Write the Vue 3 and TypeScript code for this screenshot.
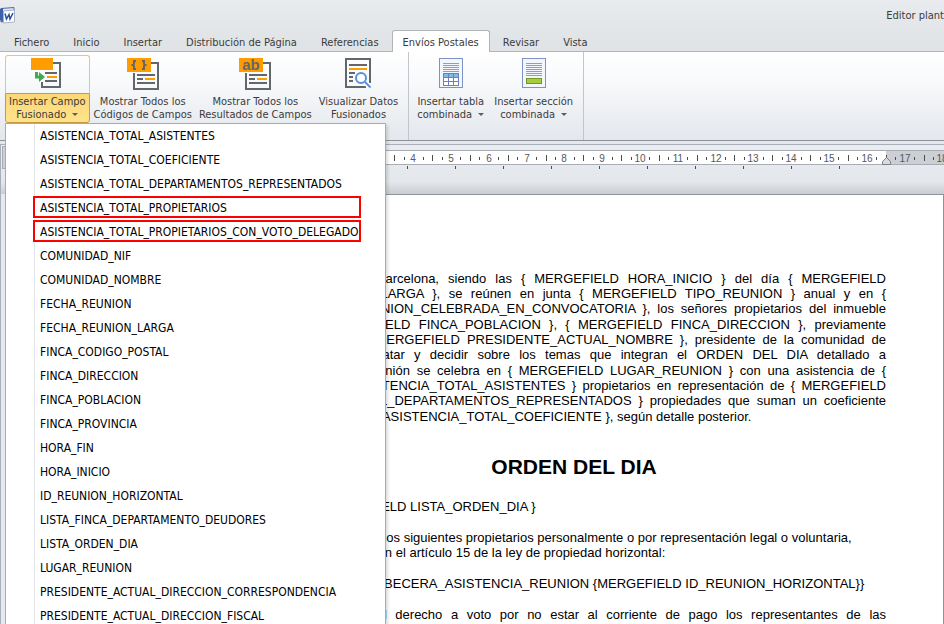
<script setup lang="ts">
import { ref } from 'vue'

const title = 'Editor plant'

const tabs: string[] = [
  'Fichero',
  'Inicio',
  'Insertar',
  'Distribución de Página',
  'Referencias',
  'Envíos Postales',
  'Revisar',
  'Vista',
]
const activeTab = ref('Envíos Postales')

interface MergeField {
  name: string
  marked?: boolean
}

const fields: MergeField[] = [
  { name: 'ASISTENCIA_TOTAL_ASISTENTES' },
  { name: 'ASISTENCIA_TOTAL_COEFICIENTE' },
  { name: 'ASISTENCIA_TOTAL_DEPARTAMENTOS_REPRESENTADOS' },
  { name: 'ASISTENCIA_TOTAL_PROPIETARIOS', marked: true },
  { name: 'ASISTENCIA_TOTAL_PROPIETARIOS_CON_VOTO_DELEGADO', marked: true },
  { name: 'COMUNIDAD_NIF' },
  { name: 'COMUNIDAD_NOMBRE' },
  { name: 'FECHA_REUNION' },
  { name: 'FECHA_REUNION_LARGA' },
  { name: 'FINCA_CODIGO_POSTAL' },
  { name: 'FINCA_DIRECCION' },
  { name: 'FINCA_POBLACION' },
  { name: 'FINCA_PROVINCIA' },
  { name: 'HORA_FIN' },
  { name: 'HORA_INICIO' },
  { name: 'ID_REUNION_HORIZONTAL' },
  { name: 'LISTA_FINCA_DEPARTAMENTO_DEUDORES' },
  { name: 'LISTA_ORDEN_DIA' },
  { name: 'LUGAR_REUNION' },
  { name: 'PRESIDENTE_ACTUAL_DIRECCION_CORRESPONDENCIA' },
  { name: 'PRESIDENTE_ACTUAL_DIRECCION_FISCAL' },
]

// Lines of the opening paragraph, already broken by the editor.
const opening: string[] = [
  'En la ciudad de Barcelona, siendo las { MERGEFIELD HORA_INICIO } del día { MERGEFIELD',
  'FECHA_REUNION_LARGA }, se reúnen en junta { MERGEFIELD TIPO_REUNION } anual y en {',
  'MERGEFIELD REUNION_CELEBRADA_EN_CONVOCATORIA }, los señores propietarios del inmueble',
  'sito en { MERGEFIELD FINCA_POBLACION }, { MERGEFIELD FINCA_DIRECCION }, previamente',
  'convocados por { MERGEFIELD PRESIDENTE_ACTUAL_NOMBRE }, presidente de la comunidad de',
  'propietarios para tratar y decidir sobre los temas que integran el ORDEN DEL DIA detallado a',
  'continuación. La reunión se celebra en { MERGEFIELD LUGAR_REUNION } con una asistencia de {',
  'MERGEFIELD ASISTENCIA_TOTAL_ASISTENTES } propietarios en representación de { MERGEFIELD',
  'ASISTENCIA_TOTAL_DEPARTAMENTOS_REPRESENTADOS } propiedades que suman un coeficiente',
  'con { MERGEFIELD ASISTENCIA_TOTAL_COEFICIENTE }, según detalle posterior.',
]

// Horizontal ruler: 1 cm is 37.8 px on screen, the text area is 16.5 cm wide.
const cm = 37.8
const at = (n: number): number => Math.round(n * cm)
const numbers = Array.from({ length: 18 }, (_, i) => i + 1)
const quarters = Array.from({ length: 18 }, (_, i) => [i + 0.25, i + 0.75]).flat()
const halves = Array.from({ length: 18 }, (_, i) => i + 0.5)
const tabStops = Array.from({ length: 13 }, (_, i) => i * 48)
</script>

<template>
  <div class="editor">
    <header class="titlebar">
      <svg width="16" height="17" viewBox="0 0 16 17" aria-hidden="true">
        <path d="M1 1.500 L14 0.500 V13 L1 15 Z" fill="#dbe6f6" stroke="#4a6db0" />
        <path d="M0 2 L3 1 V15 L0 13 Z" fill="#3c62ad" />
        <path d="M3.500 4 L14.500 3 V15 L3.500 16 Z" fill="#fff" stroke="#aab4c8" />
        <path d="M5 6.500 L6.500 12 L9 7.500 L10 12 L13 6" fill="none" stroke="#2c4f9e" stroke-width="1.500" />
      </svg>
      <span class="title">{{ title }}</span>
    </header>

    <nav class="tabs" aria-label="Cinta">
      <button
        v-for="tab in tabs"
        :key="tab"
        type="button"
        class="tab"
        :class="{ active: tab === activeTab }"
        @click="activeTab = tab"
      >
        {{ tab }}
      </button>
    </nav>

    <div class="ribbon">
      <div class="group">
        <div class="split">
          <button type="button" class="tool tool-open">
            <span class="face">
              <svg width="32" height="32" viewBox="0 0 32 32" aria-hidden="true">
                <path d="M11 24 V29 H29 V5 H22" fill="none" stroke="#63666b" stroke-width="2" />
                <rect x="0" y="0" width="22" height="12" fill="#ff9c00" />
                <path d="M14 15 H26 M14 23 H26" stroke="#63666b" stroke-width="2" />
                <path d="M16 19 H26" stroke="#ff9c00" stroke-width="2" />
                <path d="M5.500 14 V19 H9" fill="none" stroke="#43a850" stroke-width="3" />
                <path d="M8 14 L14 19 L8 24 Z" fill="#43a850" />
              </svg>
            </span>
            <span class="caption">Insertar Campo<br />Fusionado <i class="caret"></i></span>
          </button>

          <ul class="menu">
            <li v-for="field in fields" :key="field.name">
              <button type="button" class="item" :class="{ marked: field.marked }">
                {{ field.name }}
              </button>
            </li>
          </ul>
        </div>

        <button type="button" class="tool">
          <svg width="32" height="32" viewBox="0 0 32 32" aria-hidden="true">
            <path d="M7 15 V31 H31 V5 H24" fill="none" stroke="#63666b" stroke-width="2" />
            <rect x="0" y="0" width="24" height="14" fill="#ff9c00" />
            <path d="M9 3 H7 V6 L5.500 7 L7 8 V11 H9 M15 3 H17 V6 L18.500 7 L17 8 V11 H15" fill="none" stroke="#63666b" stroke-width="2" />
            <path d="M10 17 H28 M10 21 H16 M10 25 H28" stroke="#63666b" stroke-width="2" />
            <path d="M18 21 H28" stroke="#ff9c00" stroke-width="2" />
          </svg>
          <span class="caption">Mostrar Todos los<br />Códigos de Campos</span>
        </button>

        <button type="button" class="tool">
          <svg width="32" height="32" viewBox="0 0 32 32" aria-hidden="true">
            <path d="M7 15 V31 H31 V5 H24" fill="none" stroke="#63666b" stroke-width="2" />
            <rect x="0" y="0" width="24" height="14" fill="#ff9c00" />
            <text x="12" y="12" text-anchor="middle" class="glyph">ab</text>
            <path d="M10 17 H28 M10 21 H16 M10 25 H28" stroke="#63666b" stroke-width="2" />
            <path d="M18 21 H28" stroke="#ff9c00" stroke-width="2" />
          </svg>
          <span class="caption">Mostrar Todos los<br />Resultados de Campos</span>
        </button>

        <button type="button" class="tool">
          <svg width="32" height="32" viewBox="0 0 32 32" aria-hidden="true">
            <path d="M28 25 V1 H4 V29 H24" fill="none" stroke="#63666b" stroke-width="2" />
            <path d="M7 7 H25 M7 15 H13 M7 19 H11 M7 23 H11" stroke="#63666b" stroke-width="2" />
            <path d="M7 11 H25" stroke="#ff9c00" stroke-width="2" />
            <path d="M23 24 L28.500 29.500" stroke="#fff" stroke-width="5" />
            <circle cx="19" cy="20" r="5" fill="#fff" stroke="#5a8fdc" stroke-width="2" />
            <path d="M23 24 L28.500 29.500" stroke="#5a8fdc" stroke-width="2" />
          </svg>
          <span class="caption">Visualizar Datos<br />Fusionados</span>
        </button>
      </div>

      <div class="group group-inserts">
        <button type="button" class="tool">
          <svg width="32" height="32" viewBox="0 0 32 32" aria-hidden="true">
            <rect x="4.500" y="0.500" width="23" height="29" fill="#f3f7fd" stroke="#7f92c4" />
            <path d="M8 5.500 H24 M8 7.500 H24 M8 9.500 H24 M8 11.500 H24 M8 13.500 H24" stroke="#8b9dca" />
            <rect x="8.500" y="15.500" width="15" height="12" fill="#fff" stroke="#6a82ba" />
            <rect x="9" y="16" width="14" height="3" fill="#7dbbe8" />
            <path d="M8 19.500 H24 M8 23.500 H24 M13.500 16 V27 M18.500 16 V27" stroke="#6a82ba" />
          </svg>
          <span class="caption">Insertar tabla<br />combinada <i class="caret"></i></span>
        </button>

        <button type="button" class="tool">
          <svg width="32" height="32" viewBox="0 0 32 32" aria-hidden="true">
            <rect x="4.500" y="0.500" width="23" height="29" fill="#f3f7fd" stroke="#7f92c4" />
            <path d="M8 5.500 H24 M8 7.500 H24 M8 9.500 H24 M8 11.500 H24 M8 13.500 H24 M8 15.500 H24 M8 17.500 H24" stroke="#8b9dca" />
            <rect x="8.500" y="20.500" width="15" height="5" fill="#a5cd3c" stroke="#6f9a1e" />
          </svg>
          <span class="caption">Insertar sección<br />combinada <i class="caret"></i></span>
        </button>
      </div>
    </div>

    <main class="workspace">
      <div class="ruler">
        <div class="corner"></div>
        <div class="tracks">
          <svg class="scale" width="100%" height="15" aria-hidden="true">
            <rect class="beyond" :x="at(16.5)" y="0" width="100%" height="13" />
            <rect v-for="q in quarters" :key="'q' + q" :x="at(q)" y="6" width="1" height="3" class="tick" />
            <rect v-for="h in halves" :key="'h' + h" :x="at(h)" y="4" width="1" height="6" class="tick" />
            <text v-for="n in numbers" :key="'n' + n" :x="at(n)" y="11" text-anchor="middle" class="number">{{ n }}</text>
            <path d="M620.500 13.500 V10.500 L624.500 6.500 L628.500 10.500 V13.500 Z" fill="#d9dbde" stroke="#7c7f84" />
          </svg>
          <svg class="stops" width="100%" height="5" aria-hidden="true">
            <rect v-for="s in tabStops" :key="s" :x="s + 1" y="1" width="1" height="3" class="tick" />
          </svg>
        </div>
      </div>

      <article class="sheet">
        <div class="paragraph">
          <p v-for="line in opening" :key="line" class="line">{{ line }}</p>
        </div>
        <h1>ORDEN DEL DIA</h1>
        <p class="indent">{ MERGEFIELD LISTA_ORDEN_DIA }</p>
        <p>
          Asisten a la reunión: los siguientes propietarios personalmente o por representación legal o voluntaria,<br />
          según lo dispuesto, en el artículo 15 de la ley de propiedad horizontal:
        </p>
        <p>- { MERGEFIELD CABECERA_ASISTENCIA_REUNION {MERGEFIELD ID_REUNION_HORIZONTAL}}</p>
        <p class="line">
          Fueron privados del derecho a voto por no estar al corriente de pago los representantes de las
        </p>
      </article>
    </main>
  </div>
</template>

<style>
html,
body {
  margin: 0;
  overflow: hidden;
}
</style>

<style scoped>
.editor {
  display: flex;
  flex-direction: column;
  height: 100vh;
  overflow: hidden;
  background: #e4e8ee;
  color: #3b3b3b;
  font-family: 'DejaVu Sans Condensed', 'DejaVu Sans', sans-serif;
  font-size: 11px;
  white-space: nowrap;
}

button {
  margin: 0;
  padding: 0;
  border: 0;
  background: none;
  color: inherit;
  font: inherit;
  white-space: nowrap;
}

svg {
  display: block;
  overflow: visible;
}

.titlebar {
  display: flex;
  flex: none;
  justify-content: space-between;
  align-items: center;
  height: 30px;
  background: linear-gradient(#e9ebee, #e2e6e9);
}

.tabs {
  display: flex;
  flex: none;
  gap: 2px;
  height: 22px;
  padding-left: 3px;
  background: linear-gradient(#e2e6e9, #dfe3e5);
  box-shadow: inset 0 -1px #b1b5ba;
}

.tab {
  height: 22px;
  padding: 2px 10px 0;
  border: 1px solid transparent;
  border-bottom: 0;
}

.tab.active {
  border-color: #b1b5ba;
  border-radius: 3px 3px 0 0;
  background: #fff;
}

.ribbon {
  display: flex;
  flex: none;
  height: 88px;
  border-bottom: 1px solid #8f939c;
  background: linear-gradient(#fff, #f6f8fa 40%, #e3e6eb);
}

.group {
  display: flex;
  align-items: flex-start;
  gap: 1px;
  padding: 3px 7px 0 5px;
  border-right: 1px solid #c2c6cc;
}

.group-inserts {
  gap: 4px;
}

.split {
  position: relative;
}

.tool {
  display: flex;
  flex-direction: column;
  align-items: center;
  height: 68px;
  padding: 3px 3px 0;
}

.caption {
  margin-top: 5px;
  line-height: 13px;
  text-align: center;
}

.tool-open {
  padding: 0;
}

.face {
  display: flex;
  justify-content: center;
  box-sizing: border-box;
  width: 100%;
  height: 38px;
  padding-top: 2px;
  border: 1px solid #eec75e;
  border-bottom: 0;
  border-radius: 3px 3px 0 0;
}

.tool-open .caption {
  box-sizing: border-box;
  height: 30px;
  margin: 0;
  padding: 1px 3px;
  border: 1px solid #c79a3f;
  border-radius: 0 0 3px 3px;
  background: linear-gradient(#fbd777, #ffe38b);
}

.caret {
  display: inline-block;
  margin: 0 0 2px 3px;
  border: 3px solid transparent;
  border-top-color: #5c5f66;
  border-bottom: 0;
}

.glyph {
  fill: #63666b;
  font: bold 15px 'Liberation Sans', sans-serif;
}

.menu {
  position: absolute;
  top: 100%;
  left: 0;
  z-index: 1;
  box-sizing: border-box;
  width: 381px;
  margin: 0;
  padding: 0;
  border: 1px solid #a7abb0;
  background: linear-gradient(90deg, #fff 28px, #e2e4e7 28px, #e2e4e7 29px, #fff 29px);
  box-shadow: 2px 2px 3px #0002;
  list-style: none;
}

.menu li {
  height: 24px;
  padding: 0 24px 0 27px;
}

.item {
  box-sizing: border-box;
  width: 100%;
  height: 22px;
  padding: 3px 5px 0;
  border: 2px solid transparent;
  color: #000;
  font-size: 12px;
  line-height: 15px;
  text-align: left;
}

.item.marked {
  border-color: #f00;
}

.workspace {
  flex: 1;
  margin-top: 3px;
  border: 1px solid #a9afb9;
  border-width: 1px 0 0 1px;
  background: #e6e9ee;
}

.ruler {
  display: flex;
  box-sizing: border-box;
  height: 49px;
  padding: 1px 0 0 1px;
  background: linear-gradient(#e9ecf1, #e4e7eb 75%, #c9ccd0);
}

.corner {
  box-sizing: border-box;
  width: 22px;
  height: 23px;
  border: 1px solid #a9acb3;
  background: #cccfd4;
}

.tracks {
  flex: 1;
  margin-left: 238px;
  padding-top: 4px;
}

.scale {
  box-sizing: border-box;
  border: 1px solid #a9acb3;
  border-width: 1px 0;
  background: #fff;
}

.beyond {
  fill: #cccfd4;
}

.tick {
  fill: #4a4d52;
}

.number {
  fill: #55585e;
  font: 10px 'Liberation Sans', sans-serif;
}

.sheet {
  min-height: 500px;
  margin-left: 147px;
  padding: 76px 57px 0 113px;
  border: 1px solid #8f9297;
  background: #fff;
  color: #000;
  font-family: 'Liberation Sans', Arial, sans-serif;
  font-size: 13px;
  line-height: 15px;
}

.sheet p {
  margin: 0 0 16px;
}

.paragraph {
  display: grid;
  grid-auto-rows: 15px 15px 16px;
}

.sheet .line {
  margin: 0;
  text-align: justify;
  text-align-last: justify;
  white-space: normal;
}

.sheet .paragraph .line:last-child {
  text-align-last: left;
}

.sheet h1 {
  margin: 31px 0 20px;
  font-size: 21px;
  line-height: 24px;
  text-align: center;
}

.sheet .indent {
  padding-left: 52px;
}
</style>
